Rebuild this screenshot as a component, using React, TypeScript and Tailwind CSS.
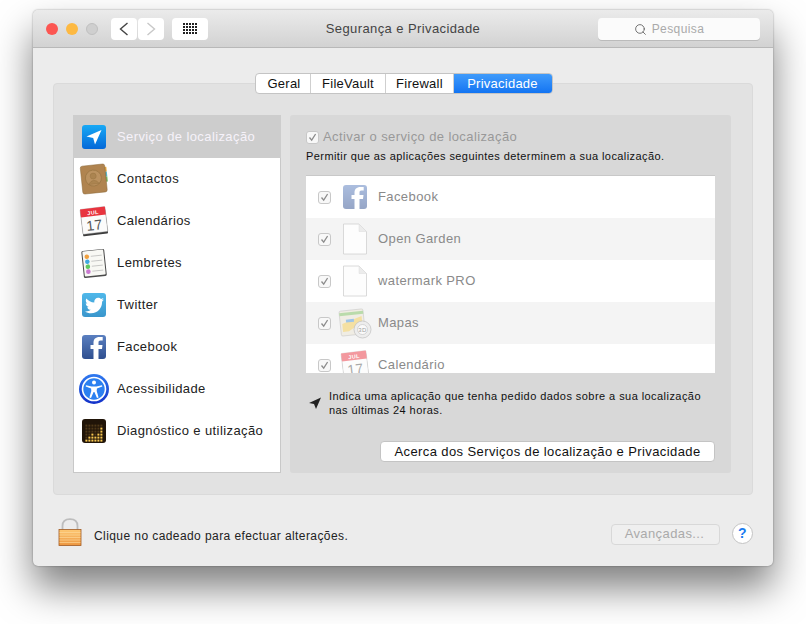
import React from "react";
import { FaTwitter } from "react-icons/fa";
import { Search } from "lucide-react";

function LocationIcon() {
  return (
    <svg width="32" height="32" viewBox="0 0 32 32">
      <defs>
        <linearGradient id="loc" x1="0" y1="0" x2="0" y2="1">
          <stop offset="0" stopColor="#18a9f5" />
          <stop offset="1" stopColor="#0468d8" />
        </linearGradient>
      </defs>
      <rect x="4" y="4" width="24" height="24" rx="3" fill="url(#loc)" />
      <path d="M23.5 9 L8.5 15.6 L15.2 17 L17 23.5 Z" fill="#fff" />
    </svg>
  );
}

function ContactsIcon() {
  return (
    <svg width="32" height="32" viewBox="0 0 32 32">
      <g transform="rotate(-6 16 16)">
        <rect x="27" y="5" width="2.5" height="5" fill="#e6a83e" />
        <rect x="27" y="10" width="2.5" height="5" fill="#58b4c8" />
        <rect x="27" y="15" width="2.5" height="5" fill="#72b860" />
        <rect x="3.5" y="2" width="24.5" height="28" rx="2" fill="#b08450" stroke="#8a6636" strokeWidth="0.5" />
        <circle cx="15.5" cy="15" r="8" fill="#bb9260" stroke="#9a7644" strokeWidth="0.8" />
        <circle cx="15.5" cy="13" r="3" fill="#ab8450" stroke="#94703f" strokeWidth="0.4" />
        <path d="M10 21 Q15.5 13.5 21 21 Z" fill="#ab8450" stroke="#94703f" strokeWidth="0.4" />
      </g>
    </svg>
  );
}

function CalendarIcon() {
  return (
    <svg width="32" height="32" viewBox="0 0 32 32">
      <g transform="rotate(-7 16 16)">
        <rect x="3.5" y="5" width="25" height="25" rx="1" fill="#3c3c3c" />
        <rect x="3.5" y="3" width="25" height="25" rx="1" fill="#fbfbfb" stroke="#888" strokeWidth="0.4" />
        <rect x="3.5" y="3" width="25" height="8" fill="#e8343f" />
        <text x="16" y="9.5" fontSize="5.5" fontWeight="700" fill="#fff" textAnchor="middle" fontFamily="Liberation Sans, sans-serif">JUL</text>
        <text x="16" y="25" fontSize="14" fill="#555" textAnchor="middle" fontFamily="Liberation Sans, sans-serif">17</text>
      </g>
    </svg>
  );
}

function RemindersIcon() {
  const rows = [
    ["#f0a040", 9],
    ["#40a8e0", 14],
    ["#60c860", 19],
    ["#c878d0", 24],
  ] as const;
  return (
    <svg width="32" height="32" viewBox="0 0 32 32">
      <g transform="rotate(-6 16 16)">
        <rect x="4.5" y="3" width="23" height="27" rx="1.5" fill="#4a4a4a" />
        <rect x="5.5" y="3.5" width="21" height="25" rx="1" fill="#f8f8f4" />
        {rows.map(([color, y]) => (
          <g key={y}>
            <circle cx="9.5" cy={y} r="2.3" fill={color} />
            <line x1="13.5" y1={y} x2="24.5" y2={y} stroke="#aaa" strokeWidth="0.6" />
          </g>
        ))}
      </g>
    </svg>
  );
}

function TwitterIcon() {
  return (
    <div className="w-[24px] h-[24px] rounded-[3px] bg-gradient-to-b from-[#4fb8ea] to-[#3a96cc] flex items-center justify-center">
      <FaTwitter className="text-white w-[19px] h-[19px]" />
    </div>
  );
}

function FacebookIcon({ faded }: { faded?: boolean }) {
  return (
    <svg width="24" height="24" viewBox="0 0 24 24" className={faded ? "opacity-50" : ""}>
      <defs>
        <linearGradient id="fb" x1="0" y1="0" x2="0" y2="1">
          <stop offset="0" stopColor="#5a7fc0" />
          <stop offset="1" stopColor="#2f4f8f" />
        </linearGradient>
      </defs>
      <rect width="24" height="24" rx="3" fill="url(#fb)" />
      <path d="M16.5 24 V14 H20 L20.5 10 H16.5 V7.5 C16.5 6.3 17 5.5 18.5 5.5 H20.7 V2 H17.5 C13.5 2 11.5 4.3 11.5 7.5 V10 H8.5 V14 H11.5 V24 Z" fill="#fff" />
    </svg>
  );
}

function AccessibilityIcon() {
  return (
    <svg width="32" height="32" viewBox="0 0 32 32">
      <defs>
        <linearGradient id="acc" x1="0" y1="0" x2="0" y2="1">
          <stop offset="0" stopColor="#2f7af0" />
          <stop offset="1" stopColor="#1230c8" />
        </linearGradient>
      </defs>
      <circle cx="16" cy="16" r="15" fill="url(#acc)" />
      <circle cx="16" cy="16" r="11.5" fill="#2c80f0" stroke="#fff" strokeWidth="1.6" />
      <circle cx="16" cy="9.4" r="2" fill="#fff" />
      <path d="M8 12.2 L13.6 13.4 H18.4 L24 12.2 L24.3 13.6 L18.9 15.4 L18.7 18 L20.6 24.6 L19 25 L16.4 19 H15.6 L13 25 L11.4 24.6 L13.3 18 L13.1 15.4 L7.7 13.6 Z" fill="#fff" />
    </svg>
  );
}

function DiagnosticsIcon() {
  const heights = [1, 2, 3, 2, 3, 5];
  return (
    <svg width="32" height="32" viewBox="0 0 32 32">
      <rect x="4" y="4" width="24" height="24" rx="3" fill="#201408" />
      {heights.map((h, col) =>
        Array.from({ length: 6 }, (_, row) => (
          <rect
            key={`${col}-${row}`}
            x={7.4 + col * 3}
            y={9.6 + row * 3}
            width="2"
            height="2"
            fill={5 - row < h ? "#f8c850" : "#4e3818"}
          />
        ))
      )}
    </svg>
  );
}

function DocIcon() {
  return (
    <svg width="26" height="32" viewBox="0 0 26 32">
      <path d="M1.5 1 H17 L24.5 8.5 V31 H1.5 Z" fill="#fdfdfd" stroke="#d0d0d0" strokeWidth="0.8" />
      <path d="M17 1 V8.5 H24.5 Z" fill="#ececec" stroke="#dcdcdc" strokeWidth="0.5" />
    </svg>
  );
}

function MapsIcon() {
  return (
    <svg width="34" height="32" viewBox="0 0 34 32" className="opacity-55">
      <g transform="rotate(-6 14 14)">
        <rect x="2" y="3" width="24" height="25" rx="1.5" fill="#eee8d8" stroke="#999" strokeWidth="0.5" />
        <path d="M2 8 H26 V5 H2 Z" fill="#8cc870" />
        <path d="M4 16 L24 10 V16 L10 24 H4 Z" fill="#f5d060" />
        <path d="M8 12 H16 V15 H8 Z" fill="#5aa0e0" />
      </g>
      <circle cx="24.5" cy="22.5" r="8.5" fill="#e8e8e8" stroke="#888" strokeWidth="0.6" />
      <circle cx="24.5" cy="22.5" r="5" fill="#fff" stroke="#999" strokeWidth="0.6" />
      <text x="24.5" y="24.8" fontSize="6" fill="#555" textAnchor="middle" fontFamily="Liberation Sans, sans-serif">3D</text>
    </svg>
  );
}

function LockIcon() {
  return (
    <svg width="24" height="30" viewBox="0 0 24 30">
      <defs>
        <linearGradient id="lock" x1="0" y1="0" x2="0" y2="1">
          <stop offset="0" stopColor="#fdc874" />
          <stop offset="1" stopColor="#ec9640" />
        </linearGradient>
      </defs>
      <path d="M4.5 12 V8 C4.5 3.5 7.5 1.2 12 1.2 C16.5 1.2 19.5 3.5 19.5 8 V12" fill="none" stroke="#bdbdbd" strokeWidth="1.8" />
      <rect x="1" y="11.5" width="22" height="16" fill="url(#lock)" stroke="#a05a24" strokeWidth="0.8" />
      {[14.5, 17, 19.5, 22, 24.5].map((y) => (
        <line key={y} x1="1.5" y1={y} x2="22.5" y2={y} stroke="#fddca0" strokeWidth="0.6" />
      ))}
    </svg>
  );
}

function GridIcon() {
  return (
    <div className="grid grid-cols-5 gap-[1px]">
      {Array.from({ length: 20 }, (_, i) => (
        <span key={i} className="w-[2px] h-[2px] bg-[#222]" />
      ))}
    </div>
  );
}

function Check({ className }: { className: string }) {
  return (
    <div className={`w-[13px] h-[13px] rounded-[3px] border border-[#c8c8c8] bg-[#f8f8f8] flex items-center justify-center ${className}`}>
      <svg width="9" height="9" viewBox="0 0 9 9">
        <path d="M1.5 4.5 L3.7 7.2 L7.6 1" fill="none" stroke="#8c8c8c" strokeWidth="1.3" />
      </svg>
    </div>
  );
}

const services = [
  { name: "Contactos", icon: <ContactsIcon /> },
  { name: "Calendários", icon: <CalendarIcon /> },
  { name: "Lembretes", icon: <RemindersIcon /> },
  { name: "Twitter", icon: <TwitterIcon /> },
  { name: "Facebook", icon: <FacebookIcon /> },
  { name: "Acessibilidade", icon: <AccessibilityIcon /> },
  { name: "Diagnóstico e utilização", icon: <DiagnosticsIcon /> },
];

const apps = [
  { name: "Facebook", icon: <FacebookIcon faded /> },
  { name: "Open Garden", icon: <DocIcon /> },
  { name: "watermark PRO", icon: <DocIcon /> },
  { name: "Mapas", icon: <MapsIcon /> },
  { name: "Calendário", icon: <div className="opacity-50"><CalendarIcon /></div> },
];

const tabs = ["Geral", "FileVault", "Firewall", "Privacidade"];

export default function App() {
  return (
    <div className="w-[806px] h-[624px] bg-white pl-[33px] pt-[10px] overflow-hidden font-['Liberation_Sans',sans-serif] text-[13px] tracking-[0.4px] text-[#222]">
      <div className="w-[740px] h-[556px] rounded-[5px] bg-[#ececec] flex flex-col shadow-[0_22px_38px_rgba(0,0,0,0.5),0_0_2px_rgba(0,0,0,0.4)]">
        <div className="h-[38px] shrink-0 rounded-t-[5px] bg-gradient-to-b from-[#ebebeb] to-[#d2d2d2] border-b border-[#b8b8b8] flex items-center pl-[13px] pr-[13px]">
          <div className="flex items-center gap-[8px]">
            <span className="w-[12px] h-[12px] rounded-full bg-[#fc5652]" />
            <span className="w-[12px] h-[12px] rounded-full bg-[#fdb942]" />
            <span className="w-[12px] h-[12px] rounded-full bg-[#cfcfcf] border border-[#c0c0c0]" />
          </div>
          <div className="flex ml-[13px] gap-[1px]">
            <div className="w-[26px] h-[22px] rounded-[4px] bg-white flex items-center justify-center">
              <svg width="10" height="14" viewBox="0 0 10 14">
                <path d="M8.5 1 L1.5 7 L8.5 13" fill="none" stroke="#444" strokeWidth="1.4" />
              </svg>
            </div>
            <div className="w-[26px] h-[22px] rounded-[4px] bg-white flex items-center justify-center">
              <svg width="10" height="14" viewBox="0 0 10 14">
                <path d="M1.5 1 L8.5 7 L1.5 13" fill="none" stroke="#c8c8c8" strokeWidth="1.4" />
              </svg>
            </div>
          </div>
          <div className="w-[36px] h-[22px] rounded-[4px] bg-white flex items-center justify-center ml-[8px]">
            <GridIcon />
          </div>
          <div className="flex-1 text-center text-[#444] pt-[1px]">Segurança e Privacidade</div>
          <div className="w-[162px] h-[22px] rounded-[4px] bg-[#fbfbfb] shadow-[0_1px_0_#bbb] flex items-center justify-center gap-[5px] pr-[20px] pt-[1px]">
            <Search className="w-[13px] h-[13px] text-[#555]" strokeWidth={1.5} />
            <span className="text-[#aaa] text-[12px]">Pesquisa</span>
          </div>
        </div>

        <div className="px-[20px] pt-[25px] flex flex-col flex-1">
          <div className="relative z-10 -mb-[11px] self-center flex h-[21px] rounded-[4px] bg-white border border-[#c4c4c4] ml-[1px] overflow-hidden tracking-[0.25px]">
            {tabs.map((t, i) => (
              <div
                key={t}
                className={`flex items-center justify-center ${
                  ["w-[55px] pl-[3px]", "w-[75px] pl-[1px]", "w-[68px] pl-[1px]", "w-[98px]"][i]
                } ${i === 3 ? "bg-gradient-to-b from-[#3f9bfb] to-[#1274f2] text-white" : "border-r border-[#cfcfcf] text-[#111]"}`}
              >
                {t}
              </div>
            ))}
          </div>
          <div className="h-[412px] rounded-[4px] bg-[#e2e2e2] border border-[#dadada] pl-[19px] pr-[21px] pt-[31px] flex gap-[9px]">
            <div className="w-[208px] h-[358px] bg-white border border-[#c8c8c8] border-t-0">
              <div className="h-[43px] bg-[#cdcdcd] flex items-center -mx-[1px] pl-[5px] gap-[7px]">
                <LocationIcon />
                <span className="text-[#f6f2fa]">Serviço de localização</span>
              </div>
              {services.map((s) => (
                <div key={s.name} className="h-[42px] flex items-center">
                  <div className="w-[32px] h-[32px] ml-[4px] flex items-center justify-center shrink-0">{s.icon}</div>
                  <span className="ml-[7px] text-[#222]">{s.name}</span>
                </div>
              ))}
            </div>

            <div className="w-[441px] h-[358px] rounded-[3px] bg-[#d8d8d8] px-[16px] pt-[15px] flex flex-col">
              <div className="flex items-center h-[14px]">
                <Check className="" />
                <span className="ml-[4px] text-[#999]">Activar o serviço de localização</span>
              </div>
              <div className="text-[11px] tracking-[0.42px] mt-[4px] text-[#111] leading-[16px]">
                Permitir que as aplicações seguintes determinem a sua localização.
              </div>
              <div className="mt-[11px] w-[409px] h-[198px] bg-white border-t border-[#c8c8c8] overflow-hidden">
                {apps.map((a, i) => (
                  <div
                    key={a.name}
                    className={`h-[42px] shrink-0 flex items-center ${i % 2 === 1 ? "bg-[#f4f4f4]" : "bg-white"}`}
                  >
                    <Check className="ml-[12px] shrink-0" />
                    <div className="w-[36px] h-[32px] flex items-center justify-center shrink-0 ml-[6px]">{a.icon}</div>
                    <span className="ml-[5px] text-[#8a8a8a]">{a.name}</span>
                  </div>
                ))}
              </div>
              <div className="flex items-center mt-[16px]">
                <svg width="14" height="14" viewBox="0 0 14 14" className="ml-[2px] shrink-0">
                  <path d="M13 1.5 L1 7 L6 8 L8 13 Z" fill="#222" />
                </svg>
                <div className="ml-[7px] text-[11px] tracking-[0.44px] leading-[14px] text-[#111]">
                  Indica uma aplicação que tenha pedido dados sobre a sua localização
                  <br />
                  nas últimas 24 horas.
                </div>
              </div>
              <div className="mt-[24px] self-end w-[335px] h-[21px] rounded-[4px] bg-white border border-[#c4c4c4] flex items-center justify-center text-[#111]">
                Acerca dos Serviços de localização e Privacidade
              </div>
            </div>
          </div>

          <div className="flex items-center mt-[24px] h-[30px]">
            <div className="ml-[5px] shrink-0 -mt-[2px]">
              <LockIcon />
            </div>
            <span className="ml-[12px] text-[12px] tracking-[0.42px] mt-[4px] text-[#222]">Clique no cadeado para efectuar alterações.</span>
            <div className="ml-auto w-[109px] h-[21px] rounded-[4px] bg-[#efefef] border border-[#d8d8d8] flex items-center justify-center text-[#aaa] pr-[2px]">
              Avançadas...
            </div>
            <div className="ml-[12px] w-[21px] h-[21px] rounded-full bg-white border border-[#c4c4c4] flex items-center justify-center text-[#1a7cf0] font-bold text-[14px] -mt-[2px]">
              ?
            </div>
          </div>
        </div>
      </div>
    </div>
  );
}
